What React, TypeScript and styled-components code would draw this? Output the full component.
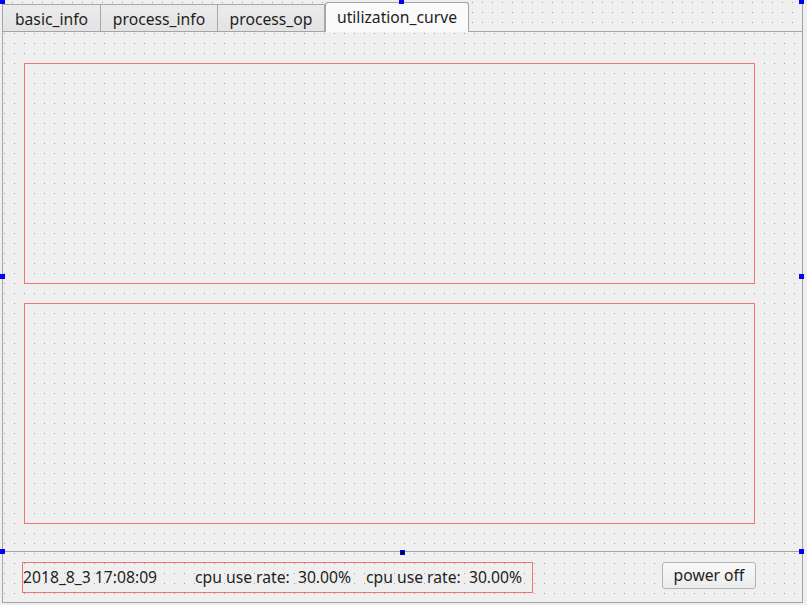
import React from "react";
import styled, { createGlobalStyle } from "styled-components";

const GlobalStyle = createGlobalStyle`
  html, body {
    margin: 0;
    padding: 0;
    background: #efefef;
  }
  body {
    font-family: "Noto Sans", "Open Sans", sans-serif;
    color: #1e1e1e;
  }
`;

const dots = (x: number, y: number) => `
  background-color: #efefef;
  background-image: conic-gradient(at 1px 1px, transparent 270deg, #a0a0a0 270deg);
  background-size: 10px 10px;
  background-position: ${x}px ${y}px;
`;

const Screen = styled.div`
  position: relative;
  width: 807px;
  height: 605px;
  overflow: hidden;
  background: #efefef;
`;

const Form = styled.div`
  box-sizing: border-box;
  margin-left: 2px;
  width: 801px;
  height: 603px;
  border: 1px solid #a4a4a4;
  border-top: none;
  display: flex;
  flex-direction: column;
  ${dots(9, 2)}
`;

const TabWidget = styled.div`
  display: flex;
  flex-direction: column;
  height: 552px;
`;

const TabBar = styled.div`
  display: flex;
  align-items: flex-end;
  height: 31px;
  flex: none;
`;

const Tab = styled.div<{ $w: number; $active?: boolean }>`
  box-sizing: border-box;
  width: ${(p) => p.$w}px;
  display: flex;
  align-items: center;
  justify-content: center;
  font-size: 15.7px;
  white-space: nowrap;
  color: #1e1e1e;
  ${(p) =>
    p.$active
      ? `
    position: relative;
    z-index: 1;
    height: 30px;
    margin-bottom: -1px;
    padding-bottom: 2px;
    background: #fafafa;
    border: 1px solid #a4a4a4;
    border-bottom: none;
    border-radius: 3px 3px 0 0;
  `
      : `
    height: 27px;
    padding-top: 1px;
    background: linear-gradient(#ebebeb, #e3e3e3);
    border-top: 1px solid #a8a8a8;
    border-right: 1px solid #a8a8a8;
  `}
`;

const Pane = styled.div`
  box-sizing: border-box;
  height: 521px;
  border-top: 1px solid #a4a4a4;
  border-bottom: 1px solid #a4a4a4;
  padding: 31px 0 0 21px;
  display: flex;
  flex-direction: column;
  gap: 19px;
  ${dots(1, 1)}
`;

const Placeholder = styled.div`
  box-sizing: border-box;
  width: 731px;
  height: 221px;
  border: 1px solid #f07474;
`;

const BottomBar = styled.div`
  flex: 1;
  display: flex;
  align-items: flex-start;
  padding: 10px 0 0 19px;
  ${dots(1, 1)}
`;

const LabelGroup = styled.div`
  box-sizing: border-box;
  width: 511px;
  height: 31px;
  border: 1px solid #f07474;
  display: flex;
  align-items: center;
  font-size: 15.7px;
  white-space: pre;
`;

const Label = styled.span<{ $w?: number }>`
  display: inline-block;
  ${(p) => (p.$w ? `width: ${p.$w}px;` : "")}
  padding-bottom: 1px;
`;

const Button = styled.button`
  box-sizing: border-box;
  margin-left: 129px;
  width: 94px;
  height: 27px;
  border: 1px solid #b2b2b2;
  border-radius: 3px;
  background: linear-gradient(#f8f8f8, #ececec);
  font-family: "Noto Sans", "Open Sans", sans-serif;
  font-size: 15.7px;
  color: #1e1e1e;
  padding: 0 0 1px;
  display: flex;
  align-items: center;
  justify-content: center;
`;

const Handle = styled.div<{ $x: number; $y: number; $dark?: boolean }>`
  position: absolute;
  left: ${(p) => p.$x}px;
  top: ${(p) => p.$y}px;
  width: 5px;
  height: 5px;
  box-sizing: border-box;
  background: ${(p) => (p.$dark ? "#000" : "#0000ff")};
  border: 1px solid #0000ff;
  z-index: 5;
`;

const handles = [
  { x: 0, y: -1 },
  { x: 399, y: -1 },
  { x: 799, y: -1 },
  { x: 0, y: 274 },
  { x: 799, y: 274 },
  { x: 0, y: 549 },
  { x: 400, y: 550, dark: true },
  { x: 799, y: 549 },
];

export default function App() {
  return (
    <Screen>
      <GlobalStyle />
      <Form>
        <TabWidget>
          <TabBar>
            <Tab $w={98}>basic_info</Tab>
            <Tab $w={117}>process_info</Tab>
            <Tab $w={107}>process_op</Tab>
            <Tab $w={144} $active>
              utilization_curve
            </Tab>
          </TabBar>
          <Pane>
            <Placeholder />
            <Placeholder />
          </Pane>
        </TabWidget>
        <BottomBar>
          <LabelGroup>
            <Label $w={172}>2018_8_3 17:08:09</Label>
            <Label $w={171}>cpu use rate:  30.00%</Label>
            <Label>cpu use rate:  30.00%</Label>
          </LabelGroup>
          <Button>power off</Button>
        </BottomBar>
      </Form>
      {handles.map((h, i) => (
        <Handle key={i} $x={h.x} $y={h.y} $dark={h.dark} />
      ))}
    </Screen>
  );
}
